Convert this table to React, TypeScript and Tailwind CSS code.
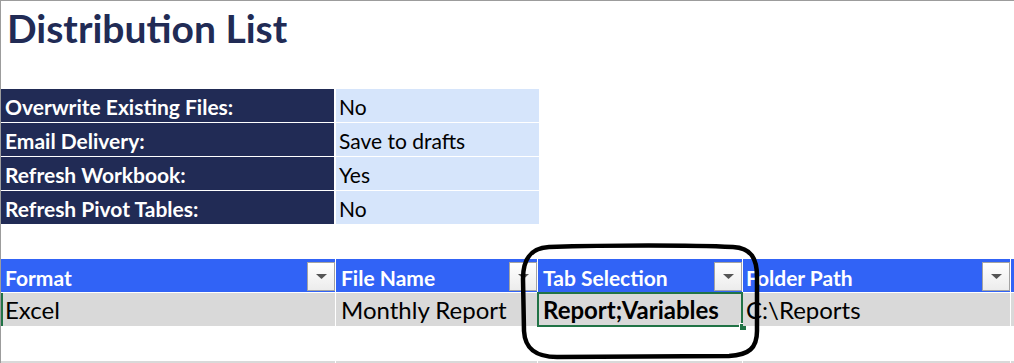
const font = "font-['Lato','Liberation_Sans',sans-serif]"

const settings: [string, string][] = [
  ['Overwrite Existing Files:', 'No'],
  ['Email Delivery:', 'Save to drafts'],
  ['Refresh Workbook:', 'Yes'],
  ['Refresh Pivot Tables:', 'No'],
]

const columns = [
  { name: 'Format', value: 'Excel', width: 'w-[334px]', pad: 'pl-[4px]' },
  { name: 'File Name', value: 'Monthly Report', width: 'w-[201px]', pad: 'pl-[5px]' },
  { name: 'Tab Selection', value: 'Report;Variables', width: 'w-[204px]', pad: 'pl-[5px]' },
  { name: 'Folder Path', value: 'C:\\Reports', width: 'w-[267px]', pad: 'pl-[3px]' },
]

function FilterButton() {
  return (
    <div className="self-end mb-px w-[28px] h-[29px] border border-[#a3a3a3] bg-gradient-to-b from-white to-[#ececec] flex items-center justify-center">
      <svg width="11" height="5" viewBox="0 0 11 5">
        <path d="M0 0 H11 L5.5 5 Z" fill="#555" />
      </svg>
    </div>
  )
}

export default function App() {
  return (
    <div className={`relative w-[1014px] h-[363px] overflow-hidden bg-white border-t border-l border-[#9c9c9c] ${font}`}>
      {/* Title */}
      <div className="h-[88px] pl-[6px] pt-[2px]">
        <h1 className="text-[39px] font-bold text-[#212b55] leading-[50px]">
          Distribution List
        </h1>
      </div>

      {/* Settings block */}
      <div className="flex flex-col gap-px w-[538px]">
        {settings.map(([label, value]) => (
          <div key={label} className="flex gap-[2px] h-[33px]">
            <div className="w-[333px] bg-[#212b55] text-white font-bold text-[21px] pl-[4px] pt-[3px] flex items-center">
              {label}
            </div>
            <div className="flex-1 bg-[#d6e5fb] text-black text-[21px] pl-[3px] pt-[3px] flex items-center">
              {value}
            </div>
          </div>
        ))}
      </div>

      {/* Distribution table */}
      <div className="mt-[35px] flex flex-col gap-px">
        <div className="flex gap-px h-[33px]">
          {columns.map((c) => (
            <div
              key={c.name}
              className={`${c.width} ${c.pad} shrink-0 bg-[#3163f6] text-white font-bold text-[21px] flex items-center justify-between`}
            >
              <span className="pt-[4px]">{c.name}</span>
              <FilterButton />
            </div>
          ))}
          <div className="flex-1 bg-[#3163f6]" />
        </div>
        <div className="flex gap-px h-[33px]">
          {columns.map((c, i) => (
            <div
              key={c.name}
              className={`relative ${c.width} ${c.pad} shrink-0 bg-[#d9d9d9] text-black text-[24px] pt-[1px] flex items-center ${i === 2 ? 'font-bold' : ''}`}
            >
              {c.value}
              {i === 2 && (
                <>
                  <div className="absolute -inset-[1px] border-2 border-[#217346]" />
                  <div className="absolute -right-[5px] -bottom-[5px] w-[8px] h-[8px] bg-[#217346] border border-white" />
                </>
              )}
            </div>
          ))}
          <div className="flex-1 bg-[#d9d9d9]" />
        </div>
        <div className="h-[33px]" />
        <div className="flex gap-px h-[10px]">
          {columns.map((c) => (
            <div key={c.name} className={`${c.width} shrink-0 bg-[#d9d9d9]`} />
          ))}
          <div className="flex-1 bg-[#d9d9d9]" />
        </div>
      </div>

      {/* active row marker on the left edge */}
      <div className="absolute left-0 top-[292px] w-[2px] h-[33px] bg-[#217346]" />

      {/* hand-drawn highlight loop */}
      <svg className="absolute left-0 top-0 pointer-events-none" width="1014" height="363">
        <path
          d="M548 246 C610 244 690 244 732 246 C750 247 756 257 756 276 L756 330 C756 347 748 354 728 355 L556 356 C535 356 524 348 523 330 L522 278 C522 257 530 247 548 246 Z"
          fill="none"
          stroke="#000"
          strokeWidth="4.5"
        />
      </svg>
    </div>
  )
}
